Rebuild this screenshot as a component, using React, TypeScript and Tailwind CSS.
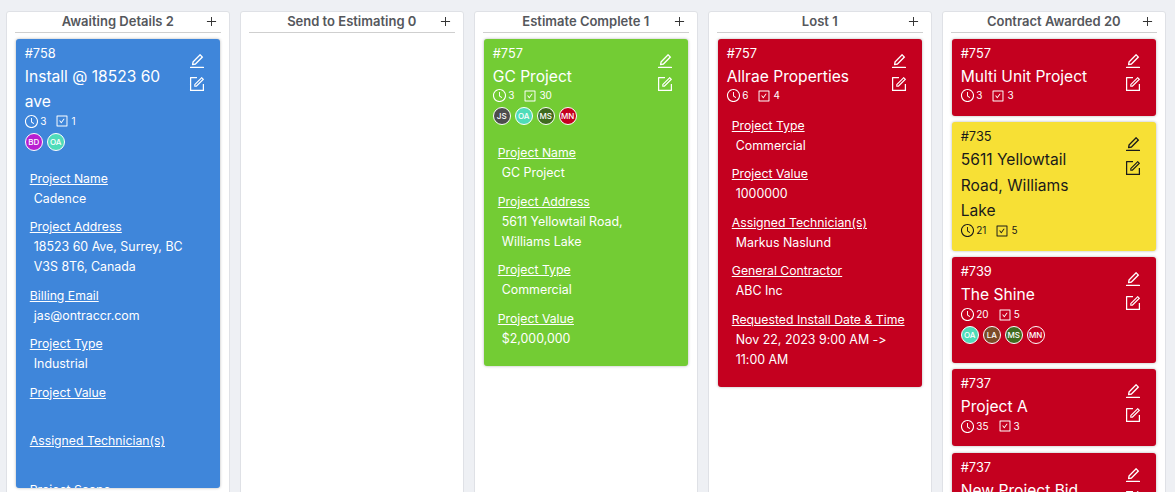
import { AiOutlineCheckSquare, AiOutlineClockCircle, AiOutlineEdit, AiOutlineForm, AiOutlinePlus } from 'react-icons/ai';

type Field = { label: string; value?: string };
type Person = { initials: string; color: string };
type CardData = {
  id: string;
  title: string;
  hours: number;
  tasks: number;
  color: string;
  dark?: boolean;
  people?: Person[];
  fields?: Field[];
  clip?: string;
};
type ColumnData = { name: string; count: number; cards: CardData[] };

const BD = { initials: 'BD', color: 'bg-[#b81fd1]' };
const OA = { initials: 'OA', color: 'bg-[#4fdcb9]' };
const JS = { initials: 'JS', color: 'bg-[#4d4d4d]' };
const MS = { initials: 'MS', color: 'bg-[#3f6b1f]' };
const MN = { initials: 'MN', color: 'bg-[#c4001f]' };
const LA = { initials: 'LA', color: 'bg-[#7b4a28]' };

const RED = 'bg-[#c4001f]';

const COLUMNS: ColumnData[] = [
  {
    name: 'Awaiting Details',
    count: 2,
    cards: [
      {
        id: '#758',
        title: 'Install @ 18523 60 ave',
        hours: 3,
        tasks: 1,
        color: 'bg-[#3f86da]',
        people: [BD, OA],
        clip: 'h-[449px]',
        fields: [
          { label: 'Project Name', value: 'Cadence' },
          { label: 'Project Address', value: '18523 60 Ave, Surrey, BC V3S 8T6, Canada' },
          { label: 'Billing Email', value: 'jas@ontraccr.com' },
          { label: 'Project Type', value: 'Industrial' },
          { label: 'Project Value' },
          { label: 'Assigned Technician(s)' },
          { label: 'Project Scope' },
        ],
      },
    ],
  },
  { name: 'Send to Estimating', count: 0, cards: [] },
  {
    name: 'Estimate Complete',
    count: 1,
    cards: [
      {
        id: '#757',
        title: 'GC Project',
        hours: 3,
        tasks: 30,
        color: 'bg-[#73cc34]',
        people: [JS, OA, MS, MN],
        fields: [
          { label: 'Project Name', value: 'GC Project' },
          { label: 'Project Address', value: '5611 Yellowtail Road, Williams Lake' },
          { label: 'Project Type', value: 'Commercial' },
          { label: 'Project Value', value: '$2,000,000' },
        ],
      },
    ],
  },
  {
    name: 'Lost',
    count: 1,
    cards: [
      {
        id: '#757',
        title: 'Allrae Properties',
        hours: 6,
        tasks: 4,
        color: RED,
        fields: [
          { label: 'Project Type', value: 'Commercial' },
          { label: 'Project Value', value: '1000000' },
          { label: 'Assigned Technician(s)', value: 'Markus Naslund' },
          { label: 'General Contractor', value: 'ABC Inc' },
          { label: 'Requested Install Date & Time', value: 'Nov 22, 2023 9:00 AM -> 11:00 AM' },
        ],
      },
    ],
  },
  {
    name: 'Contract Awarded',
    count: 20,
    cards: [
      { id: '#757', title: 'Multi Unit Project', hours: 3, tasks: 3, color: RED },
      {
        id: '#735',
        title: '5611 Yellowtail Road, Williams Lake',
        hours: 21,
        tasks: 5,
        color: 'bg-[#f7e035]',
        dark: true,
      },
      { id: '#739', title: 'The Shine', hours: 20, tasks: 5, color: RED, people: [OA, LA, MS, MN] },
      { id: '#737', title: 'Project A', hours: 35, tasks: 3, color: RED },
      { id: '#737', title: 'New Project Bid', hours: 12, tasks: 2, color: RED },
    ],
  },
];

function Avatar({ person }: { person: Person }) {
  return (
    <div
      className={`${person.color} w-[18px] h-[18px] rounded-full border border-white flex items-center justify-center text-[8px] font-medium text-white`}
    >
      {person.initials}
    </div>
  );
}

function Card({ card }: { card: CardData }) {
  const tone = card.dark ? 'text-[#1a1a1a]' : 'text-white';
  const fieldPad = card.people ? 'pt-[18px]' : 'pt-[13px]';
  return (
    <div
      className={`${card.color} ${tone} ${card.clip ?? ''} shrink-0 overflow-hidden rounded-[3px] shadow-[0_0_3px_rgba(0,0,0,0.3)] pt-[6px]`}
    >
      <div className="flex pl-[9px] pr-[14px]">
        <div className="w-[142px]">
          <div className="text-[12.8px] leading-[17px]">{card.id}</div>
          <div className="mt-[2px] text-[15.6px] leading-[25.4px]">{card.title}</div>
          <div className="flex items-center h-[14px] text-[10px]">
            <AiOutlineClockCircle size={15} className="shrink-0 -ml-[1px]" />
            <span className="ml-[1.5px]">{card.hours}</span>
            <AiOutlineCheckSquare size={14} className="ml-[9px] shrink-0" />
            <span className="ml-[2px]">{card.tasks}</span>
          </div>
          {card.people && (
            <div className="mt-[4.5px] flex gap-[4px]">
              {card.people.map((p) => (
                <Avatar key={p.initials} person={p} />
              ))}
            </div>
          )}
        </div>
        <div className="ml-auto flex flex-col items-center pt-[7px] gap-[5.5px]">
          <AiOutlineEdit size={18} />
          <AiOutlineForm size={18} />
        </div>
      </div>
      <div className={card.fields ? `${fieldPad} pl-[14px] pr-[10px] pb-[9px]` : card.people ? 'pb-[18.5px]' : 'pb-[13px]'}>
        {card.fields?.map((f) => (
          <div key={f.label} className="mb-[8.75px]">
            <div className="underline leading-[20px] text-[12.25px]">{f.label}</div>
            <div className="pl-[4px] pr-[6px] leading-[19.75px] min-h-[19.75px] text-[12.4px]">{f.value}</div>
          </div>
        ))}
      </div>
    </div>
  );
}

function Column({ column }: { column: ColumnData }) {
  return (
    <div className="w-[223.5px] shrink-0 h-[490px] bg-white border border-[#dfe1e6] rounded-t-[3px] px-[8px] overflow-hidden">
      <div className="relative h-[21px] mb-[5.5px] border-b border-[#cfcfcf] text-center text-[13px] leading-[18px] font-semibold text-[#55575c]">
        <span>
          {column.name} {column.count}
        </span>
        <AiOutlinePlus size={13} className="absolute right-[2.5px] top-[2.5px] text-[#333]" />
      </div>
      <div className="flex flex-col gap-[6.5px] px-[0.75px]">
        {column.cards.map((card, i) => (
          <Card key={i} card={card} />
        ))}
      </div>
    </div>
  );
}

export default function App() {
  return (
    <div className="h-[492px] w-[1175px] overflow-hidden bg-[#eef0f4] flex gap-[10.5px] pl-[6px] pt-[11px] font-['Inter',sans-serif] [font-feature-settings:'calt'_0]">
      {COLUMNS.map((c) => (
        <Column key={c.name} column={c} />
      ))}
    </div>
  );
}
